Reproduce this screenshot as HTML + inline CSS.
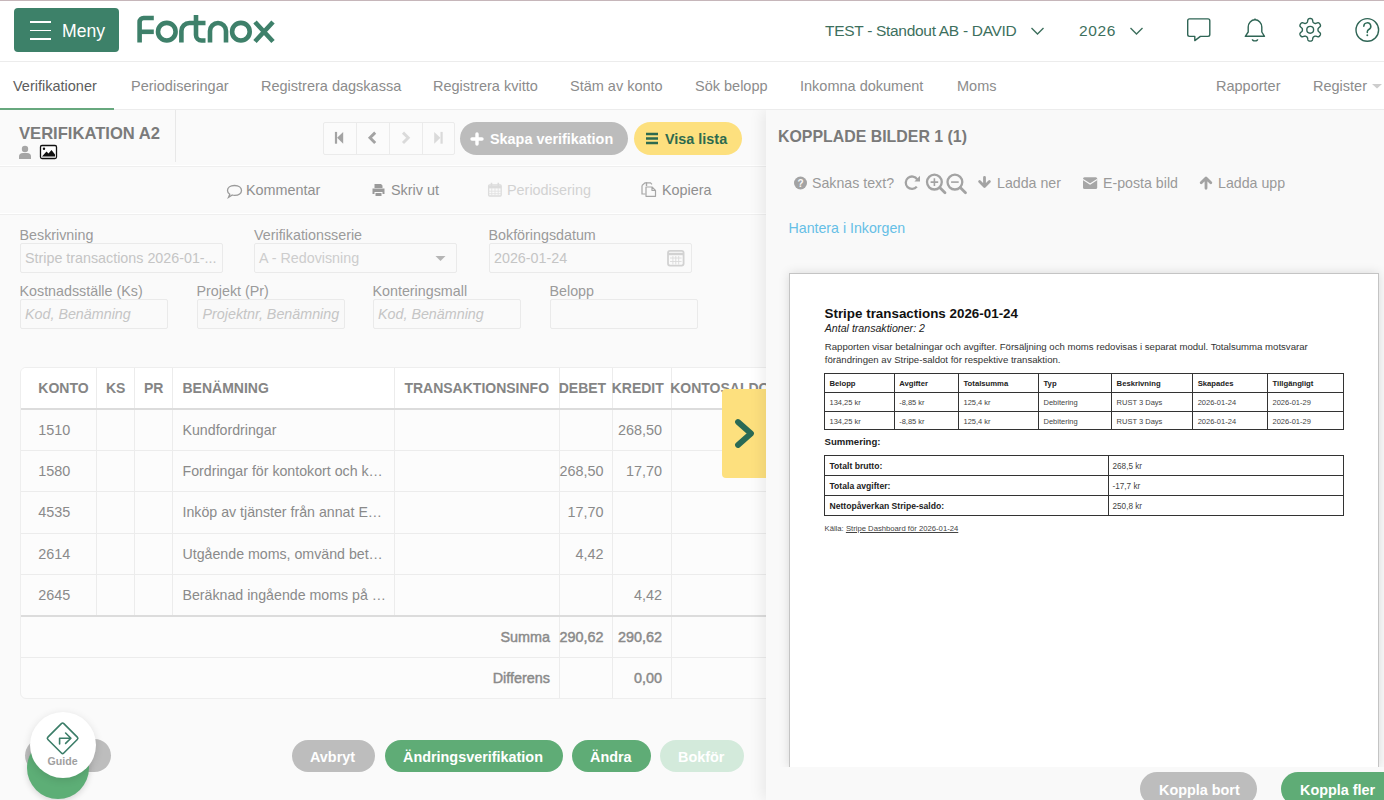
<!DOCTYPE html>
<html><head><meta charset="utf-8">
<style>
*{box-sizing:border-box;margin:0;padding:0}
html,body{width:1384px;height:800px;overflow:hidden;background:#fafafa;font-family:"Liberation Sans",sans-serif}
.a{position:absolute}
.t{position:absolute;line-height:1;white-space:nowrap}
#hdr{position:absolute;left:0;top:0;width:1384px;height:62px;background:#fff;border-bottom:1px solid #ececec}
#topline{position:absolute;left:0;top:0;width:1384px;height:1px;background:#c6b6ba}
#nav{position:absolute;left:0;top:62px;width:1384px;height:48px;background:#fff;border-bottom:1px solid #ececec}
.nv{position:absolute;top:79px;font-size:14.5px;color:#8c8c8c;line-height:1;white-space:nowrap}
</style></head><body>
<div id="hdr"></div>
<div id="topline"></div>
<!-- Meny button -->
<div class="a" style="left:14px;top:8px;width:105px;height:44px;background:#3d8169;border-radius:4px"></div>
<div class="a" style="left:29.5px;top:21px;width:21px;height:1.6px;background:#fff"></div>
<div class="a" style="left:29.5px;top:29.5px;width:21px;height:1.6px;background:#fff"></div>
<div class="a" style="left:29.5px;top:38px;width:21px;height:1.6px;background:#fff"></div>
<div class="t" style="left:62px;top:23px;font-size:17.6px;color:#fff">Meny</div>
<!-- logo -->
<svg class="a" style="left:0;top:0" width="300" height="60" viewBox="0 0 300 60">
 <g fill="none" stroke="#3e806a" stroke-width="4.6" stroke-linecap="butt">
  <path d="M139.6 42.5 V22 a4 4 0 0 1 4 -4 H153.8"/>
  <path d="M139.6 31.8 H153.8"/>
  <circle cx="166.8" cy="31.7" r="8.8"/>
  <path d="M181.4 42.5 V31 a8 8 0 0 1 8 -8 H205.5"/>
  <path d="M196 15 V35 a5.5 5.5 0 0 0 5.5 5.5 H205.5"/>
  <path d="M210 42.5 V31 a8 8 0 0 1 16 0 V42.5"/>
  <circle cx="240.9" cy="31.7" r="8.8"/>
  <path d="M255 22 L273 41.5 M273 22 L255 41.5"/>
 </g>
</svg>
<div class="t" style="left:825px;top:22.7px;font-size:15.5px;color:#3d6f5d;letter-spacing:-0.3px">TEST - Standout AB - DAVID</div>
<svg class="a" style="left:1030px;top:25px" width="16" height="12"><path d="M1.5 3 L7.5 9 L13.5 3" fill="none" stroke="#3d6f5d" stroke-width="1.4"/></svg>
<div class="t" style="left:1079px;top:22.7px;font-size:15.5px;letter-spacing:0.6px;color:#3d6f5d">2026</div>
<svg class="a" style="left:1129px;top:25px" width="16" height="12"><path d="M1.5 3 L7.5 9 L13.5 3" fill="none" stroke="#3d6f5d" stroke-width="1.4"/></svg>
<!-- header icons -->
<svg class="a" style="left:1180px;top:10px" width="204" height="40" viewBox="1180 10 204 40">
 <g fill="none" stroke="#2f6555" stroke-width="1.4" stroke-linejoin="round">
  <path d="M1189.5 18.9 H1208 a1.8 1.8 0 0 1 1.8 1.8 V34.6 a1.8 1.8 0 0 1 -1.8 1.8 H1200.4 L1194.8 40.6 V36.4 H1189.5 a1.8 1.8 0 0 1 -1.8 -1.8 V20.7 a1.8 1.8 0 0 1 1.8 -1.8 Z"/>
  <path d="M1245.3 36.3 H1264.5 L1261.8 32 V27 a6.8 7.2 0 0 0 -13.6 0 V32 Z"/>
  <path d="M1255 18.6 V19.8"/>
  <path d="M1252.4 39.2 a2.6 1.7 0 0 0 5.2 0"/>
  <circle cx="1367.3" cy="29.9" r="11.3"/>
 </g>
 <path d="M1363.8 26.3 a3.5 3.5 0 1 1 5 3.2 c-1 0.5 -1.5 1.2 -1.5 2.3 v0.8" fill="none" stroke="#2f6b57" stroke-width="1.5" stroke-linecap="round"/><circle cx="1367.3" cy="35.3" r="0.95" fill="#2f6b57"/>
 <g fill="none" stroke="#2f6555" stroke-width="1.4" stroke-linejoin="round">
  <circle cx="1310.2" cy="29.8" r="3.4"/>
  <path d="M1318.00 29.80 L1318.00 29.53 L1318.02 29.25 L1318.05 28.98 L1318.13 28.69 L1318.30 28.37 L1318.63 28.01 L1319.13 27.57 L1319.71 27.07 L1320.17 26.56 L1320.42 26.08 L1320.49 25.64 L1320.44 25.24 L1320.33 24.86 L1320.17 24.50 L1319.99 24.15 L1319.78 23.82 L1319.54 23.50 L1319.27 23.21 L1318.94 22.97 L1318.53 22.81 L1317.99 22.79 L1317.32 22.93 L1316.60 23.18 L1315.97 23.40 L1315.49 23.50 L1315.13 23.49 L1314.84 23.42 L1314.58 23.30 L1314.34 23.18 L1314.10 23.05 L1313.87 22.91 L1313.63 22.76 L1313.41 22.59 L1313.20 22.38 L1313.01 22.07 L1312.86 21.61 L1312.74 20.95 L1312.59 20.20 L1312.38 19.55 L1312.09 19.09 L1311.74 18.81 L1311.37 18.65 L1310.99 18.56 L1310.59 18.51 L1310.20 18.50 L1309.81 18.51 L1309.41 18.56 L1309.03 18.65 L1308.66 18.81 L1308.31 19.09 L1308.02 19.55 L1307.81 20.20 L1307.66 20.95 L1307.54 21.61 L1307.39 22.07 L1307.20 22.38 L1306.99 22.59 L1306.77 22.76 L1306.53 22.91 L1306.30 23.05 L1306.06 23.18 L1305.82 23.30 L1305.56 23.42 L1305.27 23.49 L1304.91 23.50 L1304.43 23.40 L1303.80 23.18 L1303.08 22.93 L1302.41 22.79 L1301.87 22.81 L1301.46 22.97 L1301.13 23.21 L1300.86 23.50 L1300.62 23.82 L1300.41 24.15 L1300.23 24.50 L1300.07 24.86 L1299.96 25.24 L1299.91 25.64 L1299.98 26.08 L1300.23 26.56 L1300.69 27.07 L1301.27 27.57 L1301.77 28.01 L1302.10 28.37 L1302.27 28.69 L1302.35 28.98 L1302.38 29.25 L1302.40 29.53 L1302.40 29.80 L1302.40 30.07 L1302.38 30.35 L1302.35 30.62 L1302.27 30.91 L1302.10 31.23 L1301.77 31.59 L1301.27 32.03 L1300.69 32.53 L1300.23 33.04 L1299.98 33.52 L1299.91 33.96 L1299.96 34.36 L1300.07 34.74 L1300.23 35.10 L1300.41 35.45 L1300.62 35.78 L1300.86 36.10 L1301.13 36.39 L1301.46 36.63 L1301.87 36.79 L1302.41 36.81 L1303.08 36.67 L1303.80 36.42 L1304.43 36.20 L1304.91 36.10 L1305.27 36.11 L1305.56 36.18 L1305.82 36.30 L1306.06 36.42 L1306.30 36.55 L1306.53 36.69 L1306.77 36.84 L1306.99 37.01 L1307.20 37.22 L1307.39 37.53 L1307.54 37.99 L1307.66 38.65 L1307.81 39.40 L1308.02 40.05 L1308.31 40.51 L1308.66 40.79 L1309.03 40.95 L1309.41 41.04 L1309.81 41.09 L1310.20 41.10 L1310.59 41.09 L1310.99 41.04 L1311.37 40.95 L1311.74 40.79 L1312.09 40.51 L1312.38 40.05 L1312.59 39.40 L1312.74 38.65 L1312.86 37.99 L1313.01 37.53 L1313.20 37.22 L1313.41 37.01 L1313.63 36.84 L1313.87 36.69 L1314.10 36.55 L1314.34 36.42 L1314.58 36.30 L1314.84 36.18 L1315.13 36.11 L1315.49 36.10 L1315.97 36.20 L1316.60 36.42 L1317.32 36.67 L1317.99 36.81 L1318.53 36.79 L1318.94 36.63 L1319.27 36.39 L1319.54 36.10 L1319.78 35.78 L1319.99 35.45 L1320.17 35.10 L1320.33 34.74 L1320.44 34.36 L1320.49 33.96 L1320.42 33.52 L1320.17 33.04 L1319.71 32.53 L1319.13 32.03 L1318.63 31.59 L1318.30 31.23 L1318.13 30.91 L1318.05 30.62 L1318.02 30.35 L1318.00 30.07 Z"/>
 </g>
</svg>
<!-- nav -->
<div id="nav"></div>
<div class="nv" style="left:13px;color:#5d5d5d">Verifikationer</div>
<div class="a" style="left:0;top:108px;width:114px;height:2px;background:#67a87e"></div>
<div class="nv" style="left:131px">Periodiseringar</div>
<div class="nv" style="left:261px">Registrera dagskassa</div>
<div class="nv" style="left:433px">Registrera kvitto</div>
<div class="nv" style="left:570px">Stäm av konto</div>
<div class="nv" style="left:695px">Sök belopp</div>
<div class="nv" style="left:800px">Inkomna dokument</div>
<div class="nv" style="left:957px">Moms</div>
<div class="nv" style="left:1216px">Rapporter</div>
<div class="nv" style="left:1313px">Register</div>
<svg class="a" style="left:1370px;top:82px" width="14" height="8"><path d="M2 2 L7 6.5 L12 2 Z" fill="#cdcdcd"/></svg>

<!-- verifikation header -->
<div class="t" style="left:19px;top:125.5px;font-size:16.6px;font-weight:700;color:#7b7b7b">VERIFIKATION A2</div>
<svg class="a" style="left:18px;top:144px" width="42" height="17" viewBox="18 144 42 17">
 <circle cx="25" cy="149" r="3.2" fill="#a6a6a6"/>
 <path d="M19 159 v-2.5 a4 3.5 0 0 1 4 -3.5 h4 a4 3.5 0 0 1 4 3.5 v2.5 Z" fill="#a6a6a6"/>
 <rect x="40.5" y="145.5" width="16" height="13" rx="1.5" fill="#fff" stroke="#111" stroke-width="1.3"/>
 <circle cx="44" cy="148.8" r="1.2" fill="#111"/>
 <path d="M42 156.5 L46.5 151.5 L48.5 153.5 L51.5 150 L55 154.5 V156.5 Z" fill="#111"/>
</svg>
<div class="a" style="left:175px;top:110px;width:1px;height:52px;background:#e8e8e8"></div>
<div class="a" style="left:0;top:165px;width:768px;height:1px;background:#ffffff"></div><div class="a" style="left:0;top:166px;width:768px;height:1px;background:#efefef"></div>
<!-- pager -->
<div class="a" style="left:322.5px;top:122px;width:132px;height:32.5px;border:1px solid #ebebeb;border-radius:2px;background:#fbfbfb"></div>
<div class="a" style="left:356px;top:123px;width:1px;height:31px;background:#ebebeb"></div>
<div class="a" style="left:389px;top:123px;width:1px;height:31px;background:#ebebeb"></div>
<div class="a" style="left:422px;top:123px;width:1px;height:31px;background:#ebebeb"></div>
<svg class="a" style="left:322px;top:122px" width="133" height="33" viewBox="322 122 133 33">
  <rect x="334.9" y="131.9" width="2.2" height="11.8" fill="#a3a3a3"/>
  <path d="M343.2 131.9 V143.7 L337.1 137.8 Z" fill="#a3a3a3"/>
  <path d="M375.2 132.6 L370 137.8 L375.2 143" fill="none" stroke="#a3a3a3" stroke-width="2.9"/>
  <path d="M403 132.6 L408.2 137.8 L403 143" fill="none" stroke="#dadada" stroke-width="2.9"/>
  <rect x="440.5" y="131.9" width="2.2" height="11.8" fill="#dadada"/>
  <path d="M434.2 131.9 V143.7 L440.4 137.8 Z" fill="#dadada"/>
</svg>
<div class="a" style="left:460px;top:122px;width:168px;height:33px;border-radius:17px;background:#bcbcbc"></div>
<svg class="a" style="left:470px;top:132px" width="14" height="14"><path d="M7 2 V12 M2 7 H12" stroke="#fff" stroke-width="3.4" stroke-linecap="round"/></svg>
<div class="t" style="left:490px;top:132px;font-size:14.4px;font-weight:700;color:#fff">Skapa verifikation</div>
<div class="a" style="left:634px;top:122px;width:108px;height:33px;border-radius:17px;background:#fde07e"></div>
<svg class="a" style="left:646px;top:132px" width="13" height="14"><path d="M0 2 H12 M0 6.5 H12 M0 11 H12" stroke="#2d6a4f" stroke-width="2.6"/></svg>
<div class="t" style="left:665px;top:132px;font-size:14.4px;font-weight:700;color:#2d6a4f">Visa lista</div>
<!-- toolbar -->
<svg class="a" style="left:225.5px;top:183.5px" width="18" height="15"><path d="M8.5 1.5 C13 1.5 15.5 3.8 15.5 6.5 C15.5 9.2 13 11.3 8.5 11.3 C7.8 11.3 7 11.2 6.3 11 L2.5 13.3 L3.8 10.2 C2.3 9.3 1.5 8 1.5 6.5 C1.5 3.8 4 1.5 8.5 1.5 Z" fill="none" stroke="#9a9a9a" stroke-width="1.3"/></svg>
<div class="t" style="left:246px;top:183px;font-size:14.4px;color:#8f8f8f">Kommentar</div>
<svg class="a" style="left:371px;top:182.5px" width="15" height="14"><path d="M3.5 1 H10 L11.5 2.5 V5 H3.5 Z M1.5 5.5 H13.5 V11 H11.5 V9 H3.5 V11 H1.5 Z M4.5 10 H10.5 V13 H4.5 Z" fill="#9a9a9a"/></svg>
<div class="t" style="left:391px;top:183px;font-size:14.4px;color:#8f8f8f">Skriv ut</div>
<svg class="a" style="left:487px;top:182px" width="16" height="16" viewBox="487 182 16 16"><rect x="488.6" y="185" width="12.6" height="11" rx="1" fill="none" stroke="#dcdcdc" stroke-width="1.3"/><path d="M488.6 187.2 H501.2" stroke="#dcdcdc" stroke-width="2.4"/><path d="M488.6 191.2 H501.2 M488.6 193.7 H501.2 M491.8 188 V196 M495 188 V196 M498.2 188 V196" stroke="#e2e2e2" stroke-width="0.9"/><path d="M491.5 182.8 V186 M498.3 182.8 V186" stroke="#dcdcdc" stroke-width="1.6"/></svg>
<div class="t" style="left:507px;top:183px;font-size:14.4px;color:#d2d2d2">Periodisering</div>
<svg class="a" style="left:640px;top:181px" width="18" height="17" viewBox="640 181 18 17"><path d="M646.5 186 V182.8 H650.5 L652 184.3" fill="none" stroke="#a6a6a6" stroke-width="1.2"/><path d="M642 185.5 V194 H645.5" fill="none" stroke="#a6a6a6" stroke-width="1.2"/><path d="M642 185.5 L645 182.8 H646.5 V186" fill="none" stroke="#a6a6a6" stroke-width="1.2"/><path d="M646 187 H652 L655.5 190.5 V196.3 H646 Z M652 187 V190.5 H655.5" fill="none" stroke="#a6a6a6" stroke-width="1.2" stroke-linejoin="round"/></svg>
<div class="t" style="left:662px;top:183px;font-size:14.4px;color:#8f8f8f">Kopiera</div>
<div class="a" style="left:0;top:213px;width:768px;height:1px;background:#ffffff"></div><div class="a" style="left:0;top:214px;width:768px;height:1px;background:#efefef"></div>

<!-- form -->
<div class="t" style="left:19.5px;top:227.5px;font-size:14.3px;color:#9b9b9b">Beskrivning</div>
<div class="a" style="left:19.5px;top:243px;width:203px;height:30px;border:1px solid #eaeaea;border-radius:2px;background:#fafafa"></div>
<div class="t" style="left:25px;top:251px;font-size:14.3px;color:#c5c5c5">Stripe transactions 2026-01-...</div>
<div class="t" style="left:254px;top:227.5px;font-size:14.3px;color:#9b9b9b">Verifikationsserie</div>
<div class="a" style="left:254px;top:243px;width:203px;height:30px;border:1px solid #eaeaea;border-radius:2px;background:#fafafa"></div>
<div class="t" style="left:259px;top:251px;font-size:14.3px;color:#cdcdcd">A - Redovisning</div>
<svg class="a" style="left:435px;top:255px" width="12" height="8"><path d="M0.5 1 L5.5 6 L10.5 1 Z" fill="#b5b5b5"/></svg>
<div class="t" style="left:488.5px;top:227.5px;font-size:14.3px;color:#9b9b9b">Bokföringsdatum</div>
<div class="a" style="left:488.5px;top:243px;width:203px;height:30px;border:1px solid #eaeaea;border-radius:2px;background:#fafafa"></div>
<div class="t" style="left:494px;top:251px;font-size:14.3px;color:#c5c5c5">2026-01-24</div>
<svg class="a" style="left:666px;top:248px" width="20" height="20" viewBox="666 248 20 20"><rect x="668" y="250.8" width="15.6" height="14.8" rx="2" fill="none" stroke="#d2d2d2" stroke-width="1.8"/><path d="M668 254 H683.6" stroke="#d2d2d2" stroke-width="2.4"/><path d="M670 258 H681.6 M670 261.5 H681.6 M672.9 256 V264.5 M675.8 256 V264.5 M678.7 256 V264.5" stroke="#dadada" stroke-width="0.9"/></svg>

<div class="t" style="left:19.5px;top:284px;font-size:14.3px;color:#9b9b9b">Kostnadsställe (Ks)</div>
<div class="a" style="left:19.5px;top:299px;width:148px;height:30px;border:1px solid #eaeaea;border-radius:2px;background:#fafafa"></div>
<div class="t" style="left:25px;top:307px;font-size:14.3px;color:#c5c5c5;font-style:italic">Kod, Benämning</div>
<div class="t" style="left:196.5px;top:284px;font-size:14.3px;color:#9b9b9b">Projekt (Pr)</div>
<div class="a" style="left:196.5px;top:299px;width:148.5px;height:30px;border:1px solid #eaeaea;border-radius:2px;background:#f9f9f9;overflow:hidden"><div class="t" style="left:5px;top:7px;font-size:14.3px;color:#c5c5c5;font-style:italic">Projektnr, Benämning</div></div>
<div class="t" style="left:372.5px;top:284px;font-size:14.3px;color:#9b9b9b">Konteringsmall</div>
<div class="a" style="left:372.5px;top:299px;width:148.5px;height:30px;border:1px solid #eaeaea;border-radius:2px;background:#fafafa"></div>
<div class="t" style="left:378px;top:307px;font-size:14.3px;color:#c5c5c5;font-style:italic">Kod, Benämning</div>
<div class="t" style="left:549.5px;top:284px;font-size:14.3px;color:#9b9b9b">Belopp</div>
<div class="a" style="left:549.5px;top:299px;width:148px;height:30px;border:1px solid #eaeaea;border-radius:2px;background:#fafafa"></div>

<!-- table -->
<div class="a" style="left:20px;top:367px;width:760px;height:332px;background:#fcfcfc;border:1px solid #eeeeee;border-radius:6px;overflow:hidden">
 <div class="a" style="left:0;top:0;width:760px;height:41px;background:#fff"></div>
 <div class="a" style="left:75.0px;top:0;width:1px;height:248px;background:#ececec"></div>
 <div class="a" style="left:112.5px;top:0;width:1px;height:248px;background:#ececec"></div>
 <div class="a" style="left:150.5px;top:0;width:1px;height:248px;background:#ececec"></div>
 <div class="a" style="left:373.0px;top:0;width:1px;height:248px;background:#ececec"></div>
 <div class="a" style="left:537.5px;top:0;width:1px;height:248px;background:#ececec"></div>
 <div class="a" style="left:590.5px;top:0;width:1px;height:248px;background:#ececec"></div>
 <div class="a" style="left:650.0px;top:0;width:1px;height:248px;background:#ececec"></div>
 <div class="a" style="left:537.5px;top:247.0px;width:1px;height:90px;background:#ececec"></div>
 <div class="a" style="left:590.5px;top:247.0px;width:1px;height:90px;background:#ececec"></div>
 <div class="a" style="left:650.0px;top:247.0px;width:1px;height:90px;background:#ececec"></div>
 <div class="a" style="left:0;top:39.5px;width:760px;height:2px;background:#dcdcdc"></div>
 <div class="a" style="left:0;top:81.5px;width:760px;height:1px;background:#ececec"></div>
 <div class="a" style="left:0;top:123.0px;width:760px;height:1px;background:#ececec"></div>
 <div class="a" style="left:0;top:164.5px;width:760px;height:1px;background:#ececec"></div>
 <div class="a" style="left:0;top:205.5px;width:760px;height:1px;background:#ececec"></div>
 <div class="a" style="left:0;top:246.5px;width:760px;height:2px;background:#dcdcdc"></div>
 <div class="a" style="left:0;top:289.0px;width:760px;height:1px;background:#ececec"></div>
</div>
<div class="t" style="left:38.3px;top:381px;font-size:14px;font-weight:700;color:#858585">KONTO</div>
<div class="t" style="left:106px;top:381px;font-size:14px;font-weight:700;color:#858585">KS</div>
<div class="t" style="left:144px;top:381px;font-size:14px;font-weight:700;color:#858585">PR</div>
<div class="t" style="left:182.5px;top:381px;font-size:14px;font-weight:700;color:#858585">BENÄMNING</div>
<div class="t" style="left:404.4px;top:381px;font-size:14px;font-weight:700;color:#858585">TRANSAKTIONSINFO</div>
<div class="t" style="left:558.7px;top:381px;font-size:14px;font-weight:700;color:#858585">DEBET</div>
<div class="t" style="left:611.7px;top:381px;font-size:14px;font-weight:700;color:#858585">KREDIT</div>
<div class="t" style="left:670.2px;top:381px;font-size:14px;font-weight:700;color:#858585">KONTOSALDO</div>
<div class="t" style="left:38.3px;top:422.9px;font-size:14.4px;color:#8a8a8a">1510</div>
<div class="t" style="left:182.5px;top:422.9px;font-size:14.2px;color:#8a8a8a">Kundfordringar</div>
<div class="t" style="right:722px;top:422.9px;font-size:14.4px;color:#8a8a8a">268,50</div>
<div class="t" style="left:38.3px;top:464.1px;font-size:14.4px;color:#8a8a8a">1580</div>
<div class="t" style="left:182.5px;top:464.1px;font-size:14.2px;color:#8a8a8a">Fordringar för kontokort och k…</div>
<div class="t" style="right:780.4px;top:464.1px;font-size:14.4px;color:#8a8a8a">268,50</div>
<div class="t" style="right:722px;top:464.1px;font-size:14.4px;color:#8a8a8a">17,70</div>
<div class="t" style="left:38.3px;top:505.3px;font-size:14.4px;color:#8a8a8a">4535</div>
<div class="t" style="left:182.5px;top:505.3px;font-size:14.2px;color:#8a8a8a">Inköp av tjänster från annat E…</div>
<div class="t" style="right:780.4px;top:505.3px;font-size:14.4px;color:#8a8a8a">17,70</div>
<div class="t" style="left:38.3px;top:546.5px;font-size:14.4px;color:#8a8a8a">2614</div>
<div class="t" style="left:182.5px;top:546.5px;font-size:14.2px;color:#8a8a8a">Utgående moms, omvänd bet…</div>
<div class="t" style="right:780.4px;top:546.5px;font-size:14.4px;color:#8a8a8a">4,42</div>
<div class="t" style="left:38.3px;top:587.7px;font-size:14.4px;color:#8a8a8a">2645</div>
<div class="t" style="left:182.5px;top:587.7px;font-size:14.2px;color:#8a8a8a">Beräknad ingående moms på …</div>
<div class="t" style="right:722px;top:587.7px;font-size:14.4px;color:#8a8a8a">4,42</div>
<div class="t" style="right:834px;top:630px;font-size:14.4px;color:#8a8a8a;-webkit-text-stroke:0.45px #8a8a8a">Summa</div>
<div class="t" style="right:780.4px;top:630px;font-size:14.4px;color:#8a8a8a;-webkit-text-stroke:0.45px #8a8a8a">290,62</div>
<div class="t" style="right:722px;top:630px;font-size:14.4px;color:#8a8a8a;-webkit-text-stroke:0.45px #8a8a8a">290,62</div>
<div class="t" style="right:834px;top:671px;font-size:14.4px;color:#8a8a8a;-webkit-text-stroke:0.45px #8a8a8a">Differens</div>
<div class="t" style="right:722px;top:671px;font-size:14.4px;color:#8a8a8a;-webkit-text-stroke:0.45px #8a8a8a">0,00</div>
<div class="a" style="left:722px;top:389px;width:46px;height:89px;background:#fde07e;border-radius:4px 0 0 4px"></div>
<svg class="a" style="left:730px;top:414px" width="30" height="40"><path d="M8 8 L21 19.5 L8 31" fill="none" stroke="#2a6a55" stroke-width="5.8" stroke-linecap="round" stroke-linejoin="round"/></svg>
<div class="a" style="left:25px;top:739px;width:86px;height:33px;border-radius:17px;background:#bdbdbd"></div>
<div class="a" style="left:27px;top:706px;width:63px;height:93px;"></div>
<div class="a" style="left:26.8px;top:737px;width:62px;height:62px;border-radius:50%;background:#5dae76;box-shadow:0 2px 6px rgba(0,0,0,0.15)"></div>
<div class="a" style="left:29.5px;top:712px;width:66px;height:66px;border-radius:50%;background:#fff;box-shadow:0 2px 8px rgba(0,0,0,0.12)"></div>
<svg class="a" style="left:44px;top:719px" width="38" height="38" viewBox="44 719 38 38"><path d="M61.4 723.6 Q62.6 722.4 63.8 723.6 L77.3 737.1 Q78.5 738.3 77.3 739.5 L63.8 753 Q62.6 754.2 61.4 753 L47.9 739.5 Q46.7 738.3 47.9 737.1 Z" fill="none" stroke="#3b7d68" stroke-width="1.6" stroke-linejoin="round"/><path d="M59.6 744 V738.2 H70.8 M65.6 733 L70.9 738.2 L65.6 743.4" fill="none" stroke="#3b7d68" stroke-width="1.6" stroke-linecap="round" stroke-linejoin="round"/></svg>
<div class="t" style="left:47.5px;top:756px;font-size:10.6px;font-weight:700;color:#a0a0a0">Guide</div>
<div class="a" style="left:291.5px;top:740px;width:83.5px;height:32px;border-radius:17px;background:#bdbdbd"></div>
<div class="t" style="left:310px;top:749.5px;font-size:14.4px;font-weight:700;color:#fff">Avbryt</div>
<div class="a" style="left:384.5px;top:740px;width:178px;height:32px;border-radius:17px;background:#5fac76"></div>
<div class="t" style="left:403px;top:749.5px;font-size:14.4px;font-weight:700;color:#fff">Ändringsverifikation</div>
<div class="a" style="left:572px;top:740px;width:79px;height:32px;border-radius:17px;background:#5fac76"></div>
<div class="t" style="left:590px;top:749.5px;font-size:14.4px;font-weight:700;color:#fff">Ändra</div>
<div class="a" style="left:659.5px;top:740px;width:84.5px;height:32px;border-radius:17px;background:#d3eadb"></div>
<div class="t" style="left:678px;top:749.5px;font-size:14.4px;font-weight:700;color:#fff">Bokför</div>

<!-- right panel -->
<div class="a" style="left:766px;top:110px;width:618px;height:690px;background:#f9f9f9;box-shadow:-3px 0 14px rgba(0,0,0,0.08);clip-path:inset(0 0 0 -40px)"></div>
<div class="t" style="left:778px;top:129px;font-size:15.9px;font-weight:700;color:#7a7a7a">KOPPLADE BILDER 1 (1)</div>
<svg class="a" style="left:793.2px;top:174.5px" width="16" height="16"><circle cx="7.5" cy="8" r="6.5" fill="#a3a3a3"/><text x="7.5" y="12" font-family="Liberation Sans" font-weight="700" font-size="10" fill="#f8f8f8" text-anchor="middle">?</text></svg>
<div class="t" style="left:812px;top:176px;font-size:14.2px;color:#9a9a9a">Saknas text?</div>
<svg class="a" style="left:902px;top:172px" width="68" height="24" viewBox="902 172 68 24">
 <path d="M917.2 179.4 A6.2 6.2 0 1 0 916.8 186.6" fill="none" stroke="#a3a3a3" stroke-width="2.3"/>
 <path d="M920 175.8 V181.4 H914.4 Z" fill="#a3a3a3"/>
 <circle cx="934.4" cy="182.1" r="7.4" fill="none" stroke="#a3a3a3" stroke-width="2.3"/>
 <path d="M939.7 187.4 L945 192.7" stroke="#a3a3a3" stroke-width="2.8" stroke-linecap="round"/>
 <path d="M930.6 182.1 H938.2 M934.4 178.3 V185.9" stroke="#a3a3a3" stroke-width="1.6"/>
 <circle cx="954.9" cy="182.1" r="7.4" fill="none" stroke="#a3a3a3" stroke-width="2.3"/>
 <path d="M960.2 187.4 L965.5 192.7" stroke="#a3a3a3" stroke-width="2.8" stroke-linecap="round"/>
 <path d="M951.1 182.1 H958.7" stroke="#a3a3a3" stroke-width="1.6"/>
</svg>
<svg class="a" style="left:970px;top:170px" width="30" height="26" viewBox="970 170 30 26"><path d="M984.5 177.5 V186 M979.6 181.6 L984.5 186.5 L989.4 181.6" fill="none" stroke="#a3a3a3" stroke-width="2.8" stroke-linecap="round" stroke-linejoin="round"/></svg>
<div class="t" style="left:997px;top:176px;font-size:14.2px;color:#9a9a9a">Ladda ner</div>
<svg class="a" style="left:1080px;top:174px" width="20" height="18" viewBox="1080 174 20 18"><rect x="1083" y="177.2" width="14.2" height="11.7" rx="1.5" fill="#a6a6a6"/><path d="M1083 179.5 L1090.1 184 L1097.2 179.5" fill="none" stroke="#f8f8f8" stroke-width="1.1"/></svg>
<div class="t" style="left:1103px;top:176px;font-size:14.2px;color:#9a9a9a">E-posta bild</div>
<svg class="a" style="left:1195px;top:172px" width="22" height="20" viewBox="1195 172 22 20"><path d="M1206 188.3 V178.5 M1201.2 182.8 L1206 178 L1210.8 182.8" fill="none" stroke="#a3a3a3" stroke-width="2.8" stroke-linecap="round" stroke-linejoin="round"/></svg>
<div class="t" style="left:1218px;top:176px;font-size:14.2px;color:#9a9a9a">Ladda upp</div>
<div class="t" style="left:788.5px;top:221px;font-size:14.2px;color:#66bfe6">Hantera i Inkorgen</div>
<!-- document frame -->
<div class="a" style="left:789px;top:273px;width:590px;height:495px;background:#fff;border:1px solid #c4c4c4;border-bottom:none;box-shadow:0 0 10px rgba(0,0,0,0.13)"></div>

<!-- document content -->
<div class="t" style="left:824.5px;top:307.3px;font-size:13.4px;font-weight:700;color:#111">Stripe transactions 2026-01-24</div>
<div class="t" style="left:824.8px;top:322.8px;font-size:10.6px;font-style:italic;color:#222">Antal transaktioner: 2</div>
<div class="t" style="left:824.8px;top:341.6px;font-size:9.6px;color:#333">Rapporten visar betalningar och avgifter. Försäljning och moms redovisas i separat modul. Totalsumma motsvarar</div>
<div class="t" style="left:824.8px;top:355.2px;font-size:9.6px;color:#333">förändringen av Stripe-saldot för respektive transaktion.</div>
<div class="t" style="left:829.5px;top:380.4px;font-size:7.7px;font-weight:700;color:#222">Belopp</div>
<div class="t" style="left:829.5px;top:398.9px;font-size:7.5px;color:#444">134,25 kr</div>
<div class="t" style="left:829.5px;top:417.5px;font-size:7.5px;color:#444">134,25 kr</div>
<div class="t" style="left:899.2px;top:380.4px;font-size:7.7px;font-weight:700;color:#222">Avgifter</div>
<div class="t" style="left:899.2px;top:398.9px;font-size:7.5px;color:#444">-8,85 kr</div>
<div class="t" style="left:899.2px;top:417.5px;font-size:7.5px;color:#444">-8,85 kr</div>
<div class="t" style="left:963.5px;top:380.4px;font-size:7.7px;font-weight:700;color:#222">Totalsumma</div>
<div class="t" style="left:963.5px;top:398.9px;font-size:7.5px;color:#444">125,4 kr</div>
<div class="t" style="left:963.5px;top:417.5px;font-size:7.5px;color:#444">125,4 kr</div>
<div class="t" style="left:1043.5px;top:380.4px;font-size:7.7px;font-weight:700;color:#222">Typ</div>
<div class="t" style="left:1043.5px;top:398.9px;font-size:7.5px;color:#444">Debitering</div>
<div class="t" style="left:1043.5px;top:417.5px;font-size:7.5px;color:#444">Debitering</div>
<div class="t" style="left:1116.6px;top:380.4px;font-size:7.7px;font-weight:700;color:#222">Beskrivning</div>
<div class="t" style="left:1116.6px;top:398.9px;font-size:7.5px;color:#444">RUST 3 Days</div>
<div class="t" style="left:1116.6px;top:417.5px;font-size:7.5px;color:#444">RUST 3 Days</div>
<div class="t" style="left:1197.7px;top:380.4px;font-size:7.7px;font-weight:700;color:#222">Skapades</div>
<div class="t" style="left:1197.7px;top:398.9px;font-size:7.5px;color:#444">2026-01-24</div>
<div class="t" style="left:1197.7px;top:417.5px;font-size:7.5px;color:#444">2026-01-24</div>
<div class="t" style="left:1272.5px;top:380.4px;font-size:7.7px;font-weight:700;color:#222">Tillgängligt</div>
<div class="t" style="left:1272.5px;top:398.9px;font-size:7.5px;color:#444">2026-01-29</div>
<div class="t" style="left:1272.5px;top:417.5px;font-size:7.5px;color:#444">2026-01-29</div>
<div class="a" style="left:824px;top:373px;width:1.3px;height:57.3px;background:#333"></div>
<div class="a" style="left:894px;top:373px;width:1.3px;height:57.3px;background:#333"></div>
<div class="a" style="left:958px;top:373px;width:1.3px;height:57.3px;background:#333"></div>
<div class="a" style="left:1038px;top:373px;width:1.3px;height:57.3px;background:#333"></div>
<div class="a" style="left:1111px;top:373px;width:1.3px;height:57.3px;background:#333"></div>
<div class="a" style="left:1192px;top:373px;width:1.3px;height:57.3px;background:#333"></div>
<div class="a" style="left:1267px;top:373px;width:1.3px;height:57.3px;background:#333"></div>
<div class="a" style="left:1343px;top:373px;width:1.3px;height:57.3px;background:#333"></div>
<div class="a" style="left:824px;top:373px;width:520.3px;height:1.3px;background:#333"></div>
<div class="a" style="left:824px;top:392px;width:520.3px;height:1.3px;background:#333"></div>
<div class="a" style="left:824px;top:411px;width:520.3px;height:1.3px;background:#333"></div>
<div class="a" style="left:824px;top:429px;width:520.3px;height:1.3px;background:#333"></div>
<div class="a" style="left:824px;top:455px;width:1.3px;height:61.3px;background:#333"></div>
<div class="a" style="left:1108px;top:455px;width:1.3px;height:61.3px;background:#333"></div>
<div class="a" style="left:1343px;top:455px;width:1.3px;height:61.3px;background:#333"></div>
<div class="a" style="left:824px;top:455px;width:520.3px;height:1.3px;background:#333"></div>
<div class="a" style="left:824px;top:475px;width:520.3px;height:1.3px;background:#333"></div>
<div class="a" style="left:824px;top:495px;width:520.3px;height:1.3px;background:#333"></div>
<div class="a" style="left:824px;top:515px;width:520.3px;height:1.3px;background:#333"></div>
<div class="t" style="left:824.5px;top:437.2px;font-size:9.6px;font-weight:700;color:#222">Summering:</div>
<div class="t" style="left:829.5px;top:461.9px;font-size:8.6px;font-weight:700;color:#222">Totalt brutto:</div>
<div class="t" style="left:1112.5px;top:462.9px;font-size:8.2px;color:#444">268,5 kr</div>
<div class="t" style="left:829.5px;top:481.8px;font-size:8.6px;font-weight:700;color:#222">Totala avgifter:</div>
<div class="t" style="left:1112.5px;top:482.8px;font-size:8.2px;color:#444">-17,7 kr</div>
<div class="t" style="left:829.5px;top:501.9px;font-size:8.6px;font-weight:700;color:#222">Nettopåverkan Stripe-saldo:</div>
<div class="t" style="left:1112.5px;top:502.9px;font-size:8.2px;color:#444">250,8 kr</div>
<div class="t" style="left:824.5px;top:525px;font-size:7.7px;color:#444">Källa: <span style="text-decoration:underline">Stripe Dashboard för 2026-01-24</span></div>
<div class="a" style="left:766px;top:767px;width:618px;height:33px;background:#f9f9f9"></div>
<div class="a" style="left:1140px;top:772px;width:117px;height:34px;border-radius:17px;background:#bdbdbd"></div>
<div class="t" style="left:1159px;top:783px;font-size:14.4px;font-weight:700;color:#fff">Koppla bort</div>
<div class="a" style="left:1281px;top:772px;width:120px;height:34px;border-radius:17px;background:#5fac76"></div>
<div class="t" style="left:1300px;top:783px;font-size:14.4px;font-weight:700;color:#fff">Koppla fler</div>
</body></html>
